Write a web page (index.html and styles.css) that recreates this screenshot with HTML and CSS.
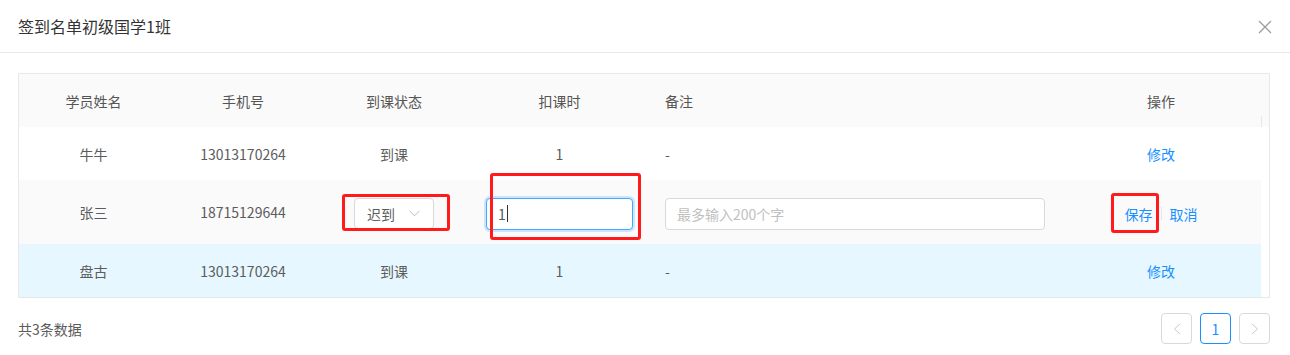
FILE: index.html
```html
<!DOCTYPE html>
<html lang="zh-CN">
<head>
  <meta charset="UTF-8" />
  <meta name="viewport" content="width=device-width, initial-scale=1.0"/>
  <title>签到名单</title>
  <link rel="stylesheet" href="styles.css">
</head>
<body>
  <div class="modal">
    <div class="modal-head">
      <span class="modal-title">签到名单初级国学1班</span>
      <svg class="close" width="14" height="14" viewBox="0 0 14 14">
        <path d="M1 1L13 13M13 1L1 13" stroke="#999" stroke-width="1.2" fill="none"/>
      </svg>
    </div>

    <div class="modal-body">
      <div class="table">
        <div class="row head">
          <div class="cell c">学员姓名</div>
          <div class="cell c">手机号</div>
          <div class="cell c">到课状态</div>
          <div class="cell c">扣课时</div>
          <div class="cell">备注</div>
          <div class="cell c">操作</div>
          <div class="gutter"></div>
        </div>

        <!-- 行 1 -->
        <div class="row">
          <div class="cell c">牛牛</div>
          <div class="cell c">13013170264</div>
          <div class="cell c">到课</div>
          <div class="cell c">1</div>
          <div class="cell">-</div>
          <div class="cell c"><a class="link">修改</a></div>
        </div>

        <!-- 行 2 编辑中 -->
        <div class="row edit">
          <div class="cell c">张三</div>
          <div class="cell c">18715129644</div>
          <div class="cell c">
            <div class="select">
              <span>迟到</span>
              <svg width="11" height="7" viewBox="0 0 11 7">
                <path d="M0.5 0.8L5.5 5.8L10.5 0.8" stroke="#bfbfbf" stroke-width="1" fill="none"/>
              </svg>
              <span class="mark mark-select"></span>
            </div>
          </div>
          <div class="cell">
            <div class="input focus">1<span class="caret"></span></div>
            <span class="mark mark-input"></span>
          </div>
          <div class="cell">
            <div class="input placeholder">最多输入200个字</div>
          </div>
          <div class="cell c">
            <span class="ops">
              <a class="link save">保存<span class="mark mark-save"></span></a>
              <span class="divider"></span>
              <a class="link">取消</a>
            </span>
          </div>
        </div>

        <!-- 行 3 -->
        <div class="row hover">
          <div class="cell c">盘古</div>
          <div class="cell c">13013170264</div>
          <div class="cell c">到课</div>
          <div class="cell c">1</div>
          <div class="cell">-</div>
          <div class="cell c"><a class="link">修改</a></div>
        </div>
      </div>

      <div class="foot">
        <span class="total">共3条数据</span>
        <div class="pager">
          <span class="page disabled">
            <svg width="8" height="12" viewBox="0 0 8 12"><path d="M7 1L1.5 6L7 11" stroke="#c8c8c8" stroke-width="1" fill="none"/></svg>
          </span>
          <span class="page active">1</span>
          <span class="page disabled">
            <svg width="8" height="12" viewBox="0 0 8 12"><path d="M1 1L6.5 6L1 11" stroke="#c8c8c8" stroke-width="1" fill="none"/></svg>
          </span>
        </div>
      </div>
    </div>
  </div>
</body>
</html>
```

FILE: styles.css
```css
body {
  margin: 0;
  font-family: "Noto Sans CJK SC", "Noto Sans", sans-serif;
  font-size: 14px;
  color: #5c5c5c;
  background: white;
}
.modal {
  width: 1290px;
  height: 355px;
  overflow: hidden;
}
.modal-head {
  height: 53px;
  border-bottom: 1px solid #e8e8e8;
  display: flex;
  align-items: center;
  justify-content: space-between;
  padding: 0 18px 0 18px;
  box-sizing: border-box;
}
.modal-title {
  font-size: 16px;
  color: #333;
  line-height: 22px;
}
.close {
  margin-top: 1px;
}
.modal-body {
  padding: 20px 20px 0 18px;
}
.table {
  border: 1px solid #e8e8e8;
  width: 1252px;
  box-sizing: border-box;
}
.row {
  display: grid;
  grid-template-columns: 149px 150px 152px 179px 412px 200px;
  height: 53px;
  margin-right: 8px;
}
.row.head {
  grid-template-columns: 149px 150px 152px 179px 412px 200px 8px;
  margin-right: 0;
  background: #fafafa;
  color: #555;
}
.gutter {
  border-left: 1px solid #e8e8e8;
  margin-top: 42px;
}
.row.edit {
  height: 64px;
  background: #fafafa;
}
.row.hover {
  background: #e6f7ff;
}
.cell {
  display: flex;
  align-items: center;
  padding: 0 16px;
  position: relative;
}
.cell.c {
  justify-content: center;
}
.link {
  color: #1890ff;
  cursor: pointer;
}
.select {
  position: relative;
  width: 80px;
  height: 31px;
  box-sizing: border-box;
  border: 1px solid #d9d9d9;
  border-radius: 4px;
  background: white;
  display: flex;
  align-items: center;
  justify-content: space-between;
  padding: 0 13px 0 12px;
  margin-top: 3px;
}
.input {
  width: 100%;
  height: 32px;
  box-sizing: border-box;
  border: 1px solid #d9d9d9;
  border-radius: 4px;
  background: white;
  display: flex;
  align-items: center;
  padding: 0 11px;
  margin-top: 3px;
  color: #595959;
}
.input.focus {
  border-color: #40a9ff;
  box-shadow: 0 0 0 2px rgba(24,144,255,0.2);
}
.input.placeholder {
  color: #bfbfbf;
}
.caret {
  display: inline-block;
  width: 1px;
  height: 17px;
  background: #333;
  margin-left: 1px;
}
.ops {
  display: flex;
  align-items: center;
  margin-top: 3px;
}
.divider {
  width: 1px;
  height: 13px;
  background: #e8e8e8;
  margin: 0 8px;
}
.save {
  position: relative;
}
.mark {
  position: absolute;
  border: 3px solid #ff1b1b;
  border-radius: 3px;
  box-sizing: border-box;
}
.mark-select {
  left: -13px;
  top: -5px;
  width: 108px;
  height: 37px;
}
.mark-input {
  left: 20px;
  top: -7px;
  width: 151px;
  height: 67px;
}
.mark-save {
  left: -14px;
  top: -11px;
  width: 48px;
  height: 40px;
}
.foot {
  display: flex;
  align-items: center;
  justify-content: space-between;
  margin-top: 15px;
  width: 1252px;
}
.total {
  color: #5c5c5c;
}
.pager {
  display: flex;
  gap: 8px;
}
.page {
  width: 31px;
  height: 31px;
  box-sizing: border-box;
  border: 1px solid #d9d9d9;
  border-radius: 4px;
  display: flex;
  align-items: center;
  justify-content: center;
  color: #595959;
}
.page.active {
  border-color: #1890ff;
  color: #1890ff;
}
```
